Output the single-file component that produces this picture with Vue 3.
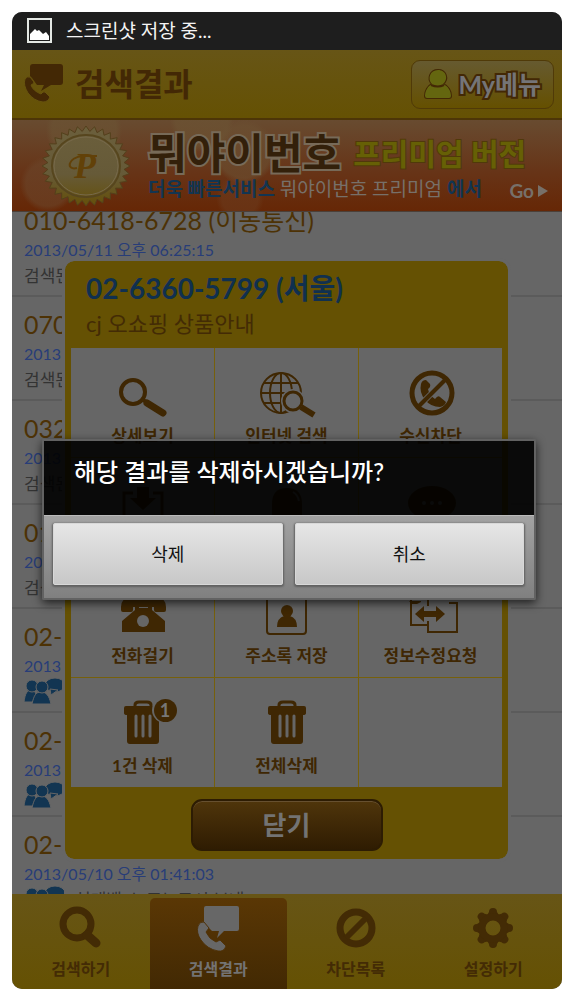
<script setup>
const entries = [
  { number: '010-6418-6728 (이동통신)', date: '2013/05/11 오후 06:25:15', memo: '검색된' },
  { number: '070', date: '2013', memo: '검색된' },
  { number: '032', date: '2013', memo: '검색된' },
  { number: '010', date: '2013', memo: '검색된' },
  { number: '02-', date: '2013', people: true },
  { number: '02-', date: '2013', people: true },
  { number: '02-', date: '2013/05/10 오후 01:41:03', people: true, memo: '현대백 소 주노고시 보내' },
]

const actions = [
  { icon: 'search', label: '상세보기' },
  { icon: 'globe', label: '인터넷 검색' },
  { icon: 'block', label: '수신차단' },
  { icon: 'download', label: '' },
  { icon: 'bell', label: '' },
  { icon: 'sms', label: '' },
  { icon: 'phone', label: '전화걸기' },
  { icon: 'contact', label: '주소록 저장' },
  { icon: 'edit', label: '정보수정요청' },
  { icon: 'trashOne', label: '1건 삭제' },
  { icon: 'trash', label: '전체삭제' },
]

const tabs = [
  { icon: 'search', label: '검색하기' },
  { icon: 'result', label: '검색결과' },
  { icon: 'ban', label: '차단목록' },
  { icon: 'gear', label: '설정하기' },
]

const callBubble =
  'M9 0H36a3 3 0 0 1 3 3V18a3 3 0 0 1-3 3H27L17 27 20 21H13L8 14 6 12V3a3 3 0 0 1 3-3Z'
const handset =
  'M1 15Q3 12 6 13L10 18Q10 20 7 21Q9 27 17 30Q19 27 21 28L26 33Q24 38 19 38Q10 37 4 29Q-1 21 1 15Z'

function star(cx, cy, rx, ry, count, depth) {
  const points = []
  for (let i = 0; i < count * 2; i++) {
    const k = i % 2 ? depth : 1
    const a = (Math.PI * i) / count
    points.push(`${(cx + rx * k * Math.cos(a)).toFixed(1)},${(cy + ry * k * Math.sin(a)).toFixed(1)}`)
  }
  return points.join(' ')
}
const seal = star(45, 41, 44, 40, 32, 0.87)
const teeth = [0, 45, 90, 135, 180, 225, 270, 315]
</script>

<template>
  <div class="page">
    <div class="device">
      <div class="status">
        <svg width="26" height="26" viewBox="0 0 26 26" aria-hidden="true">
          <rect x="1" y="1" width="23" height="23" fill="none" stroke="#e4e8e4" stroke-width="2" />
          <path d="M3 22V16L8 11 10 13 12 12 16 16 19 14 22 18V22Z" fill="#fff" />
        </svg>
        <span>스크린샷 저장 중...</span>
      </div>

      <div class="app">
        <header class="header">
          <svg width="40" height="40" viewBox="0 0 40 40" aria-hidden="true">
            <path :d="callBubble" fill="#432805" />
            <path :d="handset" fill="#432805" stroke="#66530f" stroke-width="1" />
          </svg>
          <h1>검색결과</h1>
          <button class="my" type="button">
            <svg width="30" height="32" viewBox="0 0 30 32" aria-hidden="true">
              <path
                d="M9 16C4 11 7 2 15 2S26 11 20 16C25 18 28 23 28 28Q28 30 26 30H4Q2 30 2 28C2 23 5 18 9 16Z"
                fill="#64660f" stroke="#432805" stroke-width="2" />
              <path d="M8 17Q15 20 21 17" fill="none" stroke="#432805" stroke-width="2" />
            </svg>
            <span>My메뉴</span>
          </button>
        </header>

        <a class="banner" href="#premium">
          <svg class="seal" width="90" height="82" viewBox="0 0 90 82" aria-hidden="true">
            <defs>
              <linearGradient id="gold" x1="0" y1="0" x2="0" y2="1">
                <stop offset="0" stop-color="#6b5f3c" />
                <stop offset="0.6" stop-color="#665a38" />
                <stop offset="1" stop-color="#655009" />
              </linearGradient>
            </defs>
            <polygon :points="seal" fill="url(#gold)" stroke="#54401c" stroke-width="1" />
            <ellipse cx="45" cy="41" rx="34" ry="31" fill="none" stroke="#57461e" stroke-width="2" />
            <ellipse cx="45" cy="41" rx="32" ry="29" fill="none" stroke="#77694a" stroke-width="1" />
            <text x="44" y="53" text-anchor="middle" class="seal-letter">P</text>
            <path d="M36 43C25 46 26 32 42 31L56 31" fill="none" stroke="#624108" stroke-width="2" />
          </svg>
          <span class="banner-text">
            <span class="banner-top"><b>뭐야이번호</b><strong>프리미엄 버전</strong></span>
            <span class="banner-sub">
              <span><b>더욱 빠른서비스</b> 뭐야이번호 프리미엄 <b>에서</b></span>
              <span class="go">Go
                <svg width="10" height="12" viewBox="0 0 10 12" aria-hidden="true"><path d="M0 0 10 6 0 12Z" fill="#777069" /></svg>
              </span>
            </span>
          </span>
        </a>

        <main class="main">
          <ul class="list">
            <li v-for="(e, i) in entries" :key="i">
              <div class="number">{{ e.number }}</div>
              <div class="date">{{ e.date }}</div>
              <div class="memo">
                <svg v-if="e.people" width="40" height="26" viewBox="0 0 40 26" aria-hidden="true">
                  <g fill="#123552" stroke="#666" stroke-width="1">
                    <ellipse cx="31" cy="7" rx="10" ry="7" />
                    <path d="M26 11 27 17 34 12Z" />
                    <path d="M0 24C1 16 3 12 7 12S13 16 13 24Z" />
                    <circle cx="8" cy="8" r="6" />
                    <path d="M8 26C10 17 12 14 17 14S25 17 27 26Z" />
                    <circle cx="18" cy="9" r="6" />
                  </g>
                </svg>
                <span>{{ e.memo }}</span>
              </div>
            </li>
          </ul>

          <section class="panel" aria-labelledby="panel-title">
            <h2 id="panel-title">02-6360-5799 (서울)</h2>
            <p>cj 오쇼핑 상품안내</p>
            <div class="grid">
              <button v-for="a in actions" :key="a.icon" class="cell" type="button">
                <svg width="60" height="48" viewBox="0 0 60 48" fill="#3f2703" stroke="none" aria-hidden="true">
                  <g v-if="a.icon === 'search'" fill="none" stroke="#3f2703">
                    <circle cx="20" cy="22" r="12" stroke-width="4" />
                    <path d="M29 29 33 32" stroke-width="4" />
                    <path d="M34 33 50 43" stroke-width="7" stroke-linecap="round" />
                  </g>
                  <g v-else-if="a.icon === 'globe'" fill="none" stroke="#3f2703" stroke-width="2">
                    <circle cx="24" cy="23" r="20" />
                    <ellipse cx="24" cy="23" rx="11" ry="20" />
                    <path d="M24 3V43M4 23H44M7 13H41M7 33H41" />
                    <circle cx="36" cy="31" r="11" fill="#666" stroke="#666" />
                    <circle cx="36" cy="31" r="9" stroke-width="3" />
                    <path d="M44 37 57 45" stroke-width="6" />
                  </g>
                  <g v-else-if="a.icon === 'block'">
                    <path d="M20 14Q21 10 25 10L29 14Q30 17 27 19Q28 25 34 29Q37 25 39 27L45 32Q44 36 39 37Q30 37 24 30Q18 22 20 14Z" />
                    <path d="M46 8 16 38" stroke="#666" stroke-width="6" />
                    <circle cx="31" cy="23" r="20" fill="none" stroke="#3f2703" stroke-width="5" />
                    <path d="M45 9 17 37" stroke="#3f2703" stroke-width="4" />
                  </g>
                  <g v-else-if="a.icon === 'download'">
                    <path d="M20 13H11V46H49V13H40" fill="none" stroke="#3f2703" stroke-width="3" />
                    <path d="M24 7H36V18H43L30 30 17 18H24Z" />
                  </g>
                  <g v-else-if="a.icon === 'bell'">
                    <path d="M15 46V24Q15 8 30 8T45 24V46Z" />
                    <path d="M36 12Q41 15 42 21" fill="none" stroke="#666" stroke-width="2" />
                  </g>
                  <g v-else-if="a.icon === 'sms'">
                    <ellipse cx="31" cy="23" rx="24" ry="17" />
                    <path d="M22 36 20 47 34 38Z" />
                    <g fill="#666"><circle cx="23" cy="23" r="2" /><circle cx="31" cy="23" r="2" /><circle cx="39" cy="23" r="2" /></g>
                  </g>
                  <g v-else-if="a.icon === 'phone'">
                    <path d="M8 20V17Q8 8 17 8H44Q53 8 53 17V20Q53 22 51 22H43Q41 22 41 20V17H20V20Q20 22 18 22H10Q8 22 8 20Z" />
                    <path d="M22 15H26V18H35V15H39V20L52 31V42H9V31L22 20Z" />
                    <circle cx="30" cy="31" r="6" fill="#666" />
                  </g>
                  <g v-else-if="a.icon === 'contact'">
                    <rect x="10" y="4" width="39" height="40" rx="3" fill="none" stroke="#3f2703" stroke-width="2" />
                    <circle cx="30" cy="21" r="6" />
                    <path d="M20 37Q20 28 27 26H33Q40 28 40 37Z" />
                  </g>
                  <g v-else-if="a.icon === 'edit'">
                    <path d="M27 16V6H10V35H26M48 13H56V42H27V31" fill="none" stroke="#3f2703" stroke-width="2" />
                    <path d="M14 24 23 16V21H35V16L44 24 35 32V27H23V32Z" />
                    <path d="M8 11H20V12L16 14H11Z" />
                  </g>
                  <g v-else>
                    <path d="M22 7V5Q22 2 26 2H34Q38 2 38 5V7" fill="none" stroke="#3f2703" stroke-width="3" />
                    <path d="M13 6H47Q49 6 49 8V13Q49 15 46 15V41Q46 44 43 44H17Q14 44 14 41V15Q11 15 11 13V8Q11 6 13 6Z" />
                    <path d="M23 16V36M30 16V36M37 16V36" stroke="#666" stroke-width="3" stroke-linecap="round" />
                    <circle v-if="a.icon === 'trashOne'" cx="52" cy="10" r="13" fill="#666" />
                  </g>
                </svg>
                <span v-if="a.icon === 'trashOne'" class="count">1</span>
                <span class="cell-label">{{ a.label }}</span>
              </button>
              <div class="cell"></div>
            </div>
            <button class="close" type="button">닫기</button>
          </section>
        </main>

        <nav class="tabs">
          <button v-for="t in tabs" :key="t.icon" type="button" :class="{ active: t.icon === 'result' }">
            <svg width="48" height="48" viewBox="0 0 48 48" fill="#432b05" aria-hidden="true">
              <g v-if="t.icon === 'search'" fill="none" stroke="#432b05">
                <circle cx="20" cy="21" r="14" stroke-width="7" />
                <path d="M30 32 39 40" stroke-width="9" stroke-linecap="round" />
              </g>
              <g v-else-if="t.icon === 'result'" fill="#676767">
                <path d="M12 3H43Q45 3 45 5V26Q45 28 43 28H30L23 35 25 28H18L10 20V5Q10 3 12 3Z" />
                <path d="M4 23Q6 18 10 19L15 25 12 29Q15 36 22 39L26 37 32 43Q30 49 24 48 13 46 7 37 2 30 4 23Z" stroke="#50330a" stroke-width="1" />
              </g>
              <g v-else-if="t.icon === 'ban'" fill="none" stroke="#432b05">
                <circle cx="24" cy="25" r="16" stroke-width="7" />
                <path d="M34 15 14 35" stroke-width="6" />
              </g>
              <g v-else>
                <path v-for="d in teeth" :key="d" :transform="`rotate(${d} 24 25)`" d="M17 14 20 9Q20 5 24 5T28 9L31 14Z" />
                <circle cx="24" cy="25" r="11" fill="none" stroke="#432b05" stroke-width="7" />
              </g>
            </svg>
            <span>{{ t.label }}</span>
          </button>
        </nav>

        <div class="overlay">
          <div class="dialog" role="alertdialog" aria-labelledby="dialog-text">
            <p id="dialog-text">해당 결과를 삭제하시겠습니까?</p>
            <div class="buttons">
              <button type="button">삭제</button>
              <button type="button">취소</button>
            </div>
          </div>
        </div>
      </div>
    </div>
  </div>
</template>

<style>
body {
  background: #fff;
}
</style>

<style scoped>
* {
  box-sizing: border-box;
}
.page {
  display: flex;
  height: 100vh;
  padding: 12px;
  font-family: Lato, "Noto Sans CJK KR", sans-serif;
}
button {
  margin: 0;
  padding: 0;
  border: 0;
  background: none;
  font-family: inherit;
}
svg {
  display: block;
  flex: none;
}
.device {
  flex: 1;
  min-width: 0;
  display: flex;
  flex-direction: column;
  border-radius: 10px;
  overflow: hidden;
  background: #666;
}
.status {
  flex: none;
  height: 38px;
  padding: 0 15px;
  display: flex;
  align-items: center;
  gap: 13px;
  background: #1e1e1e;
  color: #f4f4f4;
  font-size: 19px;
  line-height: 24px;
}
.app {
  position: relative;
  flex: 1;
  min-height: 0;
  display: flex;
  flex-direction: column;
}
.header {
  flex: none;
  height: 70px;
  padding: 0 8px 0 12px;
  display: flex;
  align-items: center;
  background: linear-gradient(#675516, #655103);
  border-bottom: 2px solid #4d3507;
}
.header h1 {
  margin: 0 auto 0 11px;
  font-size: 32px;
  line-height: 40px;
  font-weight: 700;
  color: #432805;
}
.my {
  height: 49px;
  padding: 0 12px 0 11px;
  display: flex;
  align-items: center;
  gap: 5px;
  border: 1px solid #503a08;
  border-radius: 9px;
  background: linear-gradient(#665a30, #655000);
  color: #747477;
  font-size: 25px;
  line-height: 32px;
  font-weight: 700;
  -webkit-text-stroke: 4px #432805;
  paint-order: stroke fill;
}
.banner {
  flex: none;
  height: 92px;
  padding: 0 14px 0 29px;
  display: flex;
  align-items: center;
  gap: 17px;
  overflow: hidden;
  text-decoration: none;
  border-bottom: 1px solid #4c4038;
  background:
    radial-gradient(circle at 72px 10px, #6b543499 0 32px, transparent 38px),
    radial-gradient(circle at 190px 0, #6c543499 0 26px, transparent 32px),
    radial-gradient(circle at 232px 32px, #6b503299 0 26px, transparent 32px),
    radial-gradient(circle at 36px 64px, #6b452a99 0 22px, transparent 28px),
    radial-gradient(circle at 228px 78px, #6b3a1c99 0 18px, transparent 24px),
    linear-gradient(#684b30, #673316 60%, #662706);
}
.seal-letter {
  font-family: "Liberation Serif", serif;
  font-style: italic;
  font-weight: 700;
  font-size: 36px;
  fill: #624108;
}
.banner-text {
  flex: 1;
  min-width: 0;
  white-space: nowrap;
}
.banner-top {
  display: flex;
  align-items: center;
  gap: 12px;
  height: 46px;
  margin-top: 5px;
}
.banner-top b {
  font-size: 42px;
  line-height: 46px;
  color: #33200a;
  -webkit-text-stroke: 4px #776a58;
  paint-order: stroke fill;
}
.banner-top strong {
  font-size: 30px;
  line-height: 46px;
  color: #666005;
  -webkit-text-stroke: 2px #50390a;
  paint-order: stroke fill;
}
.banner-sub {
  display: flex;
  justify-content: space-between;
  height: 30px;
  font-size: 19px;
  line-height: 26px;
  color: #777069;
}
.banner-sub b {
  color: #123552;
}
.go {
  display: flex;
  align-items: center;
  gap: 4px;
  font-weight: 700;
}
.main {
  position: relative;
  flex: 1;
  min-height: 0;
  overflow: hidden;
}
.list {
  list-style: none;
  margin: -19px 0 0;
  padding: 0;
}
.list li {
  height: 104px;
  padding: 13px 12px 0;
  border-bottom: 2px solid #5b5b5b;
}
.number {
  font-size: 25px;
  line-height: 28px;
  color: #4d3205;
}
.date {
  margin-top: 4px;
  font-size: 16px;
  line-height: 24px;
  color: #283d78;
}
.memo {
  display: flex;
  gap: 11px;
  font-size: 17px;
  line-height: 28px;
  color: #333;
}
.panel {
  position: absolute;
  top: 46px;
  left: 50px;
  right: 51px;
  padding: 12px 6px 8px;
  border: 3px solid #666;
  border-radius: 12px;
  background: #655103;
  background-clip: padding-box;
}
.panel h2 {
  margin: 0;
  padding-left: 15px;
  font-size: 28px;
  line-height: 30px;
  color: #10304f;
}
.panel p {
  margin: 6px 0 9px;
  padding-left: 15px;
  font-size: 22px;
  line-height: 30px;
  color: #432b05;
}
.grid {
  display: grid;
  grid-template-columns: repeat(3, 1fr);
  grid-auto-rows: 109px;
  gap: 1px;
  background: #76600b;
}
.cell {
  position: relative;
  display: flex;
  flex-direction: column;
  align-items: center;
  gap: 6px;
  padding-top: 22px;
  background: #666;
  color: #3f2703;
}
.cell-label {
  font-size: 17px;
  line-height: 24px;
  font-weight: 700;
}
.count {
  position: absolute;
  top: 21px;
  left: calc(50% + 11px);
  width: 23px;
  border-radius: 12px;
  background: #3f2703;
  color: #777;
  font-size: 18px;
  line-height: 23px;
  font-weight: 700;
  text-align: center;
}
.close {
  display: block;
  width: 192px;
  height: 52px;
  margin: 12px auto 0;
  border: 2px solid #2d1c03;
  border-radius: 11px;
  background: linear-gradient(#4f350b, #2f1c02);
  box-shadow: inset 0 1px 0 #665030;
  color: #737373;
  font-size: 26px;
  line-height: 40px;
  font-weight: 700;
}
.tabs {
  flex: none;
  height: 95px;
  display: grid;
  grid-template-columns: repeat(4, 1fr);
  background: linear-gradient(#675516, #655103);
}
.tabs button {
  margin-top: 4px;
  padding-top: 5px;
  display: flex;
  flex-direction: column;
  align-items: center;
  gap: 6px;
  border-radius: 5px 5px 0 0;
  color: #432b05;
  font-size: 16px;
  line-height: 24px;
  font-weight: 700;
}
.tabs .active {
  background: linear-gradient(#5a3705, #422903);
  color: #737373;
}
.overlay {
  position: absolute;
  inset: 0;
  display: flex;
  align-items: center;
  padding: 0 26px 0 30px;
}
.dialog {
  flex: 1;
  border: 2px solid #626262;
  border-radius: 2px;
  box-shadow: 0 3px 10px rgba(0, 0, 0, 0.7);
}
.dialog p {
  margin: 0;
  padding: 13px 30px 25px;
  background: rgba(0, 0, 0, 0.9);
  color: #fff;
  font-size: 24px;
  line-height: 36px;
  font-weight: 500;
}
.buttons {
  display: grid;
  grid-template-columns: 1fr 1fr;
  gap: 12px;
  padding: 7px 10px 13px 9px;
  border-top: 1px solid #bbb;
  background: linear-gradient(#a2a2a2, #808080);
}
.buttons button {
  height: 62px;
  border: 1px solid #d8d8d8;
  border-radius: 2px;
  background: linear-gradient(#e6e6e6, #c8c8c8);
  box-shadow: 0 1px 2px 1px #606060;
  color: #111;
  font-size: 18px;
  line-height: 24px;
}
</style>
